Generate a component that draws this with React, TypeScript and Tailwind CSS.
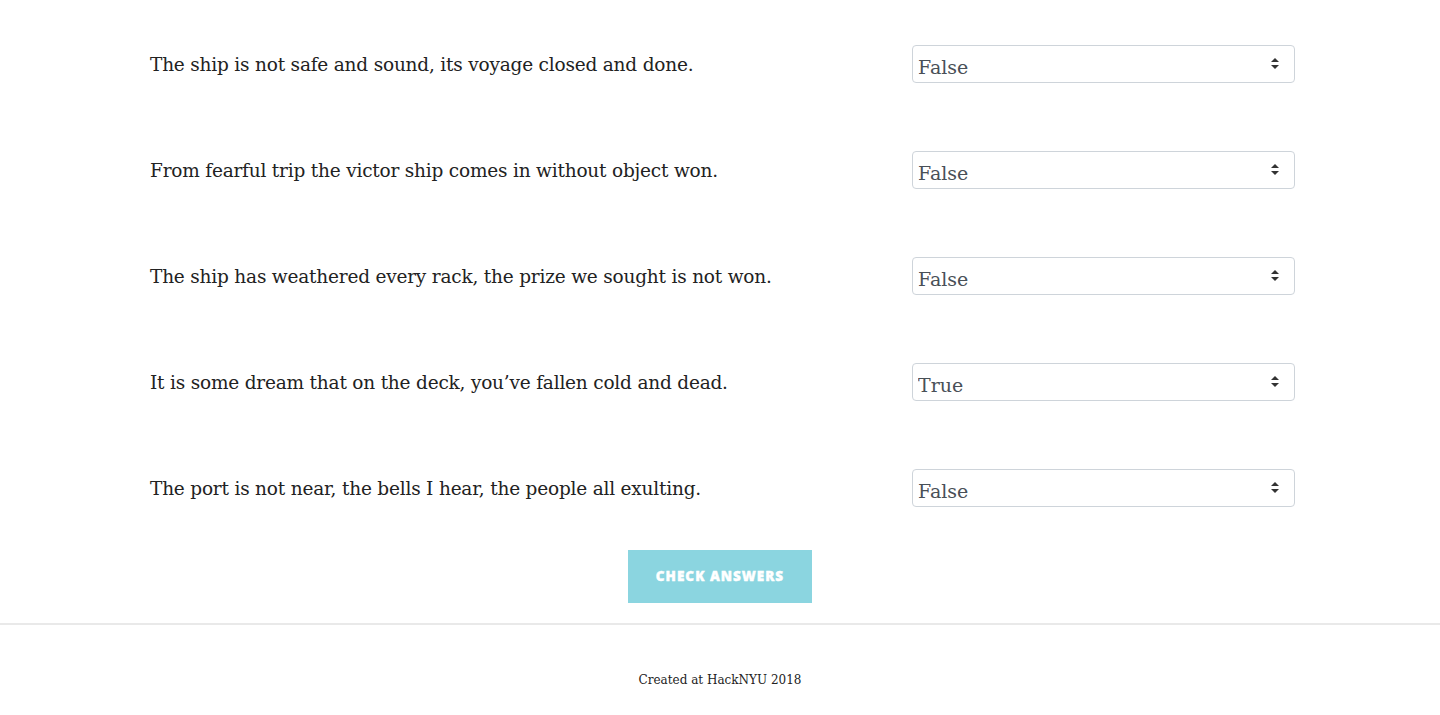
import React from 'react';

const rows = [
    { q: 'The ship is not safe and sound, its voyage closed and done.', a: 'False' },
    { q: 'From fearful trip the victor ship comes in without object won.', a: 'False' },
    { q: 'The ship has weathered every rack, the prize we sought is not won.', a: 'False' },
    { q: 'It is some dream that on the deck, you\u2019ve fallen cold and dead.', a: 'True' },
    { q: 'The port is not near, the bells I hear, the people all exulting.', a: 'False' },
];

const serif = { fontFamily: '"DejaVu Serif", "Liberation Serif", serif' };

const App: React.FC = () => {
    return (
        <div className="min-h-[715px] bg-white text-[#212529]" style={serif}>
            <div className="w-[1145px] ml-[150px] pt-[11px]">
                {rows.map((r, i) => (
                    <div key={i} className="h-[106px] flex items-center justify-between">
                        <p className="text-[18.5px] tracking-[-0.2px] text-[#222] pt-[2px]">{r.q}</p>
                        <div className="relative w-[383px] h-[38px]">
                            <select
                                defaultValue={r.a}
                                className="appearance-none w-full h-full border border-[#ced4da] rounded-[4px] bg-white pl-[5px] pt-[6px] text-[19px] text-[#495057] outline-none"
                                style={serif}
                            >
                                <option>True</option>
                                <option>False</option>
                            </select>
                            <svg className="absolute right-[16px] top-[13px] pointer-events-none" width="8" height="11" viewBox="0 0 8 11">
                                <path d="M4 0 L8 4 L0 4 Z M4 11 L8 7 L0 7 Z" fill="#333" />
                            </svg>
                        </div>
                    </div>
                ))}
            </div>
            <div className="flex justify-center mt-[9px]">
                <button
                    className="w-[184px] h-[53px] bg-[#8bd5e0] text-white text-[13.5px] font-black tracking-[1px] uppercase"
                    style={{ fontFamily: '"Open Sans", "DejaVu Sans", sans-serif', WebkitTextStroke: '0.4px white' }}
                >
                    Check Answers
                </button>
            </div>
            <div className="mt-[20px] border-t-2 border-[#e9e9e9] h-[92px] flex items-center justify-center">
                <p className="text-[12px] text-[#222] pt-[20px]">Created at HackNYU 2018</p>
            </div>
        </div>
    );
};

export default App;
